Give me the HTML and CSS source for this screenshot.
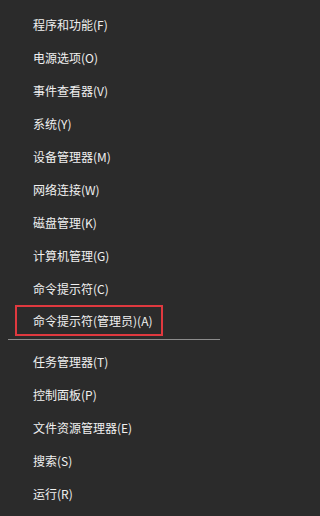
FILE: index.html
```html
<!DOCTYPE html>
<html lang="zh-CN">
<head>
<meta charset="utf-8">
<title>Win+X 菜单</title>
<link rel="stylesheet" href="styles.css">
</head>
<body>
<div class="menu">
  <ul class="group">
    <li class="item">程序和功能(F)</li>
    <li class="item">电源选项(O)</li>
    <li class="item">事件查看器(V)</li>
    <li class="item">系统(Y)</li>
    <li class="item">设备管理器(M)</li>
    <li class="item">网络连接(W)</li>
    <li class="item">磁盘管理(K)</li>
    <li class="item">计算机管理(G)</li>
    <li class="item">命令提示符(C)</li>
    <li class="item item-marked">命令提示符(管理员)(A)</li>
  </ul>
  <div class="separator"></div>
  <ul class="group">
    <li class="item">任务管理器(T)</li>
    <li class="item">控制面板(P)</li>
    <li class="item">文件资源管理器(E)</li>
    <li class="item">搜索(S)</li>
    <li class="item">运行(R)</li>
  </ul>
</div>
</body>
</html>
```
FILE: styles.css
```css
html, body {
  margin: 0;
  padding: 0;
  background: #2b2b2b;
}
body {
  width: 231px;
  height: 516px;
  overflow: hidden;
  font-family: "Noto Sans CJK SC", "Noto Sans", sans-serif;
  font-size: 12px;
  color: #f0f0f0;
}
.menu {
  padding-top: 8px;
}
.group {
  list-style: none;
  margin: 0;
  padding: 0;
}
.item {
  height: 33px;
  display: flex;
  align-items: center;
  padding-left: 33px;
  box-sizing: border-box;
  white-space: nowrap;
}
.item-marked {
  width: 148px;
  height: 31px;
  margin-left: 15px;
  margin-bottom: 2px;
  padding-left: 16px;
  border: 2px solid #e0393f;
}
.separator {
  height: 1px;
  margin: 3px 11px 5px 8px;
  background: #8c8c8c;
}
```
